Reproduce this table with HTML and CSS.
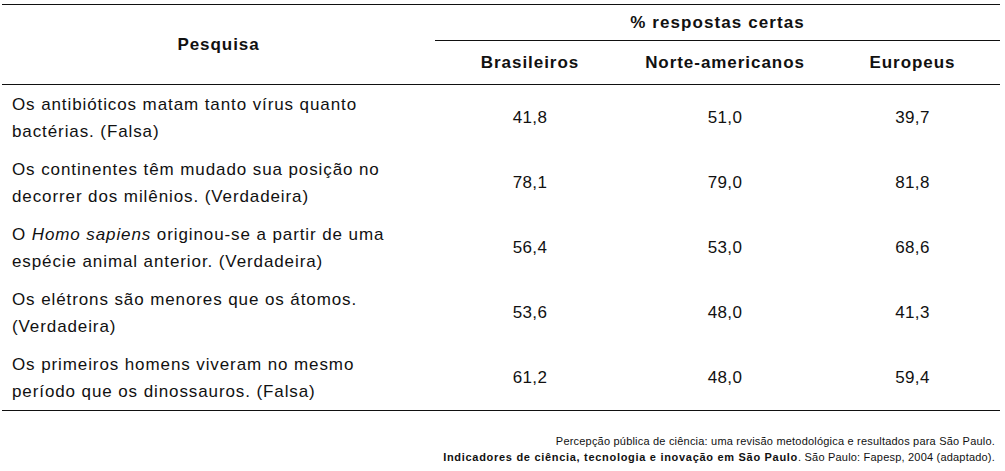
FILE: index.html
```html
<!DOCTYPE html>
<html lang="pt-BR">
<head>
<meta charset="utf-8">
<title>Percepção pública de ciência</title>
<link rel="stylesheet" href="styles.css">
</head>
<body>
<table class="survey">
  <colgroup>
    <col class="c-q">
    <col class="c-br">
    <col class="c-na">
    <col class="c-eu">
  </colgroup>
  <thead>
    <tr class="h1">
      <th rowspan="2" class="pesq">Pesquisa</th>
      <th colspan="3" class="group">% respostas certas</th>
    </tr>
    <tr class="h2">
      <th>Brasileiros</th>
      <th>Norte-americanos</th>
      <th class="eu">Europeus</th>
    </tr>
  </thead>
  <tbody>
    <tr>
      <td class="q">Os antibióticos matam tanto vírus quanto<br>bactérias. (Falsa)</td>
      <td>41,8</td><td>51,0</td><td>39,7</td>
    </tr>
    <tr>
      <td class="q">Os continentes têm mudado sua posição no<br>decorrer dos milênios. (Verdadeira)</td>
      <td>78,1</td><td>79,0</td><td>81,8</td>
    </tr>
    <tr>
      <td class="q">O <em>Homo sapiens</em> originou-se a partir de uma<br>espécie animal anterior. (Verdadeira)</td>
      <td>56,4</td><td>53,0</td><td>68,6</td>
    </tr>
    <tr>
      <td class="q">Os elétrons são menores que os átomos.<br>(Verdadeira)</td>
      <td>53,6</td><td>48,0</td><td>41,3</td>
    </tr>
    <tr>
      <td class="q">Os primeiros homens viveram no mesmo<br>período que os dinossauros. (Falsa)</td>
      <td>61,2</td><td>48,0</td><td>59,4</td>
    </tr>
  </tbody>
</table>
<div class="source">
  <p>Percepção pública de ciência: uma revisão metodológica e resultados para São Paulo.</p>
  <p><b>Indicadores de ciência, tecnologia e inovação em São Paulo</b>. São Paulo: Fapesp, 2004 (adaptado).</p>
</div>
</body>
</html>
```
FILE: styles.css
```css
html, body {
  margin: 0;
  padding: 0;
  background: #ffffff;
}
body {
  font-family: "Liberation Sans", Arial, sans-serif;
  color: #111111;
}
.survey {
  margin: 4px 0 0 2px;
  width: 998px;
  border-collapse: collapse;
  table-layout: fixed;
  font-size: 17px;
}
.c-q { width: 433px; }
.c-br { width: 190px; }
.c-na { width: 200px; }
.c-eu { width: 175px; }
.survey thead {
  border-top: 1.5px solid #111;
  border-bottom: 1.5px solid #111;
}
.survey th {
  font-weight: bold;
  text-align: center;
  vertical-align: middle;
  padding: 0;
  letter-spacing: 0.95px;
}
.h1 th { height: 35px; }
.h2 th { height: 43px; }
.survey th.group {
  border-bottom: 1.5px solid #111;
  letter-spacing: 1.1px;
}
.survey td {
  text-align: center;
  vertical-align: middle;
  height: 65px;
  padding: 0;
  line-height: 27px;
  letter-spacing: 0.3px;
}
.survey td.q {
  text-align: left;
  padding-left: 10px;
  letter-spacing: 0.9px;
}
.survey tbody {
  border-bottom: 1.5px solid #111;
}
.source {
  width: 995px;
  margin-top: 22px;
  text-align: right;
  font-size: 11px;
  line-height: 16px;
  letter-spacing: 0.2px;
}
.source b {
  letter-spacing: 0.7px;
}
.source p { margin: 0; }
```
